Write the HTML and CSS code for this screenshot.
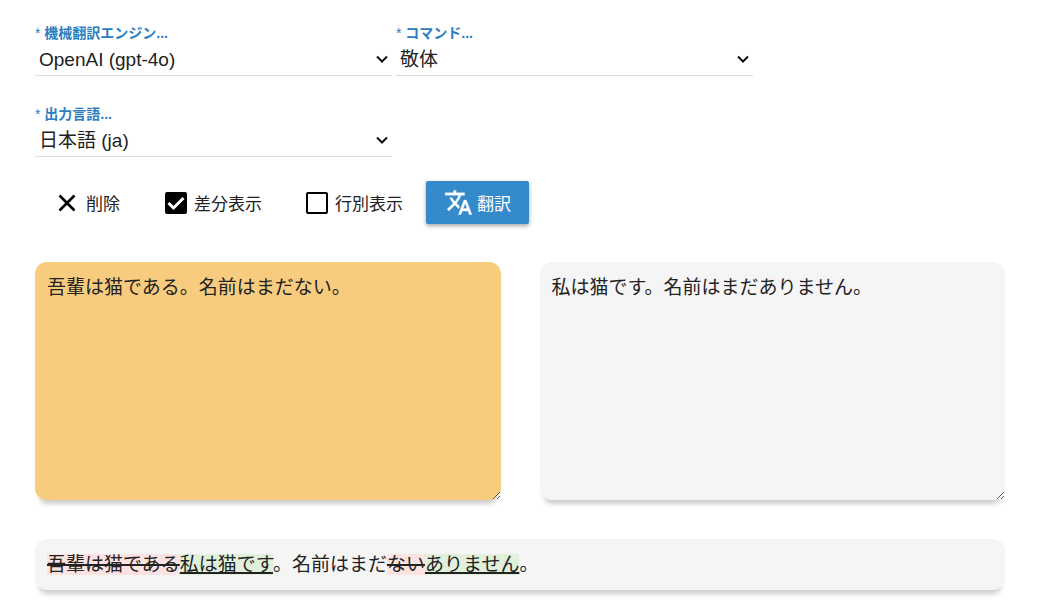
FILE: index.html
```
<!DOCTYPE html>
<html lang="ja">
<head>
<meta charset="utf-8">
<meta name="viewport" content="width=device-width, initial-scale=1">
<title>機械翻訳</title>
<link rel="stylesheet" href="styles.css">
</head>
<body>
<main class="page">
  <form class="form">
    <div class="fields">
      <div class="field">
        <label class="field-label" for="engine"><span class="required">*</span> 機械翻訳エンジン...</label>
        <div class="select-box">
          <select class="select" id="engine"><option>OpenAI (gpt-4o)</option></select>
          <svg class="chevron" viewBox="0 0 12 8" aria-hidden="true"><path d="M1 1.500 6 6.500l5-5"/></svg>
        </div>
      </div>
      <div class="field">
        <label class="field-label" for="command"><span class="required">*</span> コマンド...</label>
        <div class="select-box">
          <select class="select" id="command"><option>敬体</option></select>
          <svg class="chevron" viewBox="0 0 12 8" aria-hidden="true"><path d="M1 1.500 6 6.500l5-5"/></svg>
        </div>
      </div>
    </div>
    <div class="fields">
      <div class="field">
        <label class="field-label" for="language"><span class="required">*</span> 出力言語...</label>
        <div class="select-box">
          <select class="select" id="language"><option>日本語 (ja)</option></select>
          <svg class="chevron" viewBox="0 0 12 8" aria-hidden="true"><path d="M1 1.500 6 6.500l5-5"/></svg>
        </div>
      </div>
    </div>
    <div class="toolbar">
      <button class="clear" type="button">
        <svg class="icon" viewBox="0 0 24 24" aria-hidden="true"><path d="m4.500 4.500 15 15m0-15-15 15" fill="none" stroke="currentColor" stroke-width="2.600"/></svg>
        削除
      </button>
      <label class="check">
        <span class="check-box">
          <input class="check-input" type="checkbox" checked>
          <svg class="check-mark" viewBox="0 0 22 22" aria-hidden="true"><path d="m3.500 11 5 5L18.500 6"/></svg>
        </span>
        差分表示
      </label>
      <label class="check">
        <span class="check-box">
          <input class="check-input" type="checkbox">
          <svg class="check-mark" viewBox="0 0 22 22" aria-hidden="true"><path d="m3.500 11 5 5L18.500 6"/></svg>
        </span>
        行別表示
      </label>
      <button class="translate" type="button">
        <svg class="translate-icon" viewBox="0 0 24 24" aria-hidden="true"><path fill="currentColor" stroke="currentColor" stroke-width=".3" d="m12.870 15.070-2.540-2.510.030-.030A17.520 17.520 0 0 0 14.070 6H17V4h-7V2H8v2H1v2h11.170C11.500 7.920 10.440 9.750 9 11.350 8.070 10.320 7.300 9.190 6.690 8h-2c.730 1.630 1.730 3.170 2.980 4.560l-5.090 5.020L4 19l5-5 3.110 3.110.760-2.040zM18.500 10h-2L12 22h2l1.120-3h4.750L21 22h2l-4.500-12zm-2.620 7 1.620-4.330L19.120 17h-3.240z"/></svg>
        翻訳
      </button>
    </div>
    <div class="panes">
      <textarea class="pane pane-source" aria-label="原文">吾輩は猫である。名前はまだない。</textarea>
      <textarea class="pane" aria-label="訳文">私は猫です。名前はまだありません。</textarea>
    </div>
  </form>
  <p class="diff"><del class="removed">吾輩は猫である</del><ins class="added">私は猫です</ins>。名前はまだ<del class="removed">ない</del><ins class="added">ありません</ins>。</p>
</main>
</body>
</html>
```
FILE: styles.css
```
* {
  box-sizing: border-box;
}

body {
  margin: 0;
  background: #fff;
  color: #222;
  font-family: "Liberation Sans", "Noto Sans CJK JP", sans-serif;
  font-size: 19px;
}

button,
select,
textarea {
  font: inherit;
  color: inherit;
}

.page {
  padding: 23px 40px 20px 35px;
}

.fields {
  display: flex;
  gap: 4px;
  margin-bottom: 28px;
}

.field {
  flex: 0 1 357px;
  min-width: 0;
}

.field-label {
  display: block;
  color: #2b7dc0;
  font-size: 14px;
  font-weight: 700;
  line-height: 20px;
}

.required {
  font-weight: 400;
}

.select-box {
  display: grid;
  align-items: center;
  border-bottom: 1px solid #ddd;
}

.select {
  grid-area: 1 / 1;
  width: 100%;
  height: 32px;
  padding: 0 24px 0 4px;
  border: 0;
  appearance: none;
  background: transparent;
}

.chevron {
  grid-area: 1 / 1;
  justify-self: end;
  width: 12px;
  height: 8px;
  margin-right: 4px;
  fill: none;
  stroke: #111;
  stroke-width: 2;
  pointer-events: none;
}

.toolbar {
  display: flex;
  align-items: center;
  margin: -4px 0 38px;
  padding-left: 20px;
  font-size: 17px;
}

.clear {
  display: flex;
  align-items: center;
  gap: 7px;
  margin-right: 45px;
  padding: 0;
  border: 0;
  background: none;
}

.icon {
  width: 24px;
  height: 24px;
  color: #000;
}

.check {
  display: flex;
  align-items: center;
  gap: 7px;
  margin-right: 44px;
}

.check + .translate {
  margin-left: -21px;
}

.check-box {
  display: grid;
}

.check-input {
  grid-area: 1 / 1;
  width: 22px;
  height: 22px;
  margin: 0;
  border: 2px solid #000;
  border-radius: 2px;
  appearance: none;
  background: #fff;
}

.check-input:checked {
  background: #000;
}

.check-mark {
  grid-area: 1 / 1;
  z-index: 1;
  width: 22px;
  height: 22px;
  fill: none;
  stroke: #fff;
  stroke-width: 3;
  pointer-events: none;
  visibility: hidden;
}

.check-input:checked + .check-mark {
  visibility: visible;
}

.translate {
  display: flex;
  align-items: center;
  gap: 4px;
  height: 43px;
  padding: 0 18px;
  border: 0;
  border-radius: 2px;
  background: #358acb;
  color: #fff;
  box-shadow: 0 2px 4px rgba(0, 0, 0, 0.35);
}

.translate-icon {
  width: 29px;
  height: 29px;
}

.panes {
  display: grid;
  grid-template-columns: 1fr 1fr;
  gap: 39px;
  margin-bottom: 39px;
}

.pane,
.diff {
  border: 0;
  border-radius: 12px;
  background: #f5f5f5;
  box-shadow: 0 8px 5px -4px rgba(0, 0, 0, 0.2);
  line-height: 27px;
}

.pane {
  display: block;
  width: 100%;
  height: 238px;
  padding: 12px;
  resize: both;
}

.pane-source {
  background: #f7cc7f;
}

.diff {
  margin: 0;
  padding: 12px;
}

.removed,
.added {
  text-decoration-thickness: 2px;
}

.removed {
  background: #fde2e2;
}

.added {
  background: #e0f0db;
}
```
